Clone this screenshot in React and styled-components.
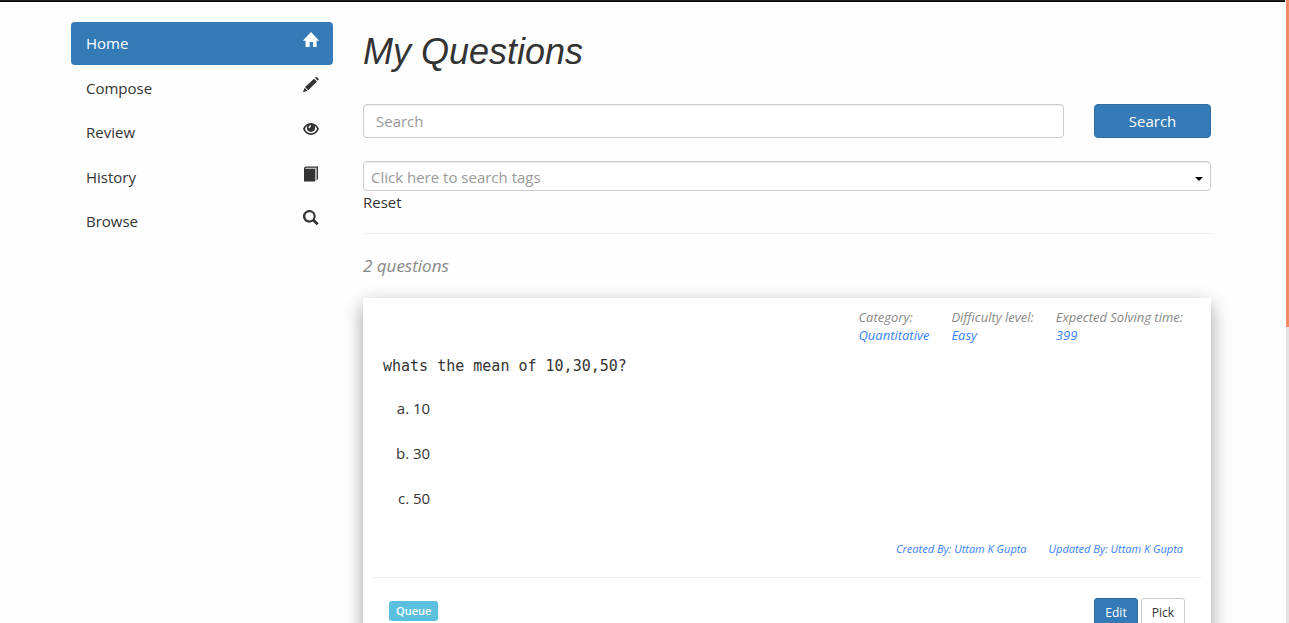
import React from "react";
import styled, { createGlobalStyle, css } from "styled-components";

const GlobalStyle = createGlobalStyle`
  *, *::before, *::after { box-sizing: border-box; }
  html { scrollbar-width: none; }
  html::-webkit-scrollbar { display: none; }
  body {
    margin: 0;
    background: #fefefe;
    color: #333;
    font: 15px/1.5 "Open Sans", "Noto Sans", sans-serif;
  }
  a { color: inherit; text-decoration: none; }
  button, input, select { font: inherit; }
`;

const TopBar = styled.header`
  height: 2px;
  margin-right: 4px;
  background: #222;
  border-bottom: 1px solid #080808;
`;

const ScrollRail = styled.div`
  position: fixed;
  inset: 0 0 0 auto;
  width: 3px;
  background: #e4e4e4;
`;

const ScrollThumb = styled.div`
  height: 327px;
  background: #f08b66;
`;

const Page = styled.div`
  padding: 20px 7px 40px 0;
`;

const Container = styled.div`
  display: grid;
  grid-template-columns: 262fr 848fr;
  column-gap: 30px;
  align-items: start;
  max-width: 1170px;
  margin: 0 auto;
  padding: 0 15px;
`;

const Nav = styled.nav`
  display: flex;
  flex-direction: column;
  gap: 2px;
`;

const NavLink = styled.a`
  display: flex;
  justify-content: space-between;
  align-items: flex-start;
  padding: 10px 14px 10px 15px;
  border-radius: 4px;
  ${(p) => p.$active && css`
    background: #337ab7;
    color: #fff;
  `}
`;

const Glyph = styled.svg`
  width: 16px;
  height: 16px;
  fill: currentColor;
`;

const Main = styled.main`
  min-width: 0;
`;

const Title = styled.h1`
  margin: 10px 0 33px;
  font: italic 400 36px/39px "Liberation Sans", Arial, sans-serif;
`;

const SearchForm = styled.form`
  display: grid;
  grid-template-columns: 6fr 1fr;
  column-gap: 30px;
  margin-bottom: 23px;
`;

const field = css`
  display: block;
  width: 100%;
  background: #fff;
  border: 1px solid #ccc;
  border-radius: 4px;
  box-shadow: inset 0 1px 1px rgba(0, 0, 0, 0.075);
`;

const SearchInput = styled.input`
  ${field}
  height: 34px;
  padding: 6px 12px;
  &::placeholder { color: #999; opacity: 1; }
`;

const Button = styled.button`
  height: ${(p) => (p.$small ? 30 : 34)}px;
  padding: 0 10px;
  border: 1px solid ${(p) => (p.$primary ? "#2e6da4" : "#ccc")};
  border-radius: ${(p) => (p.$small ? 3 : 4)}px;
  background: ${(p) => (p.$primary ? "#337ab7" : "#fff")};
  color: ${(p) => (p.$primary ? "#fff" : "#333")};
  font-size: ${(p) => (p.$small ? 12 : 15)}px;
`;

const TagField = styled.div`
  position: relative;
  &::after {
    content: "";
    position: absolute;
    top: 16px;
    right: 8px;
    border: 4px solid transparent;
    border-top-color: #000;
    border-bottom: 0;
    pointer-events: none;
  }
`;

const TagSelect = styled.select`
  ${field}
  height: 30px;
  padding: 2px 7px 0;
  appearance: none;
  color: #999;
`;

const ResetLink = styled.a`
  display: block;
  width: fit-content;
  line-height: 22px;
`;

const Divider = styled.hr`
  margin: 20px 0;
  border: 0;
  border-top: 1px solid #eee;
`;

const Count = styled.p`
  margin: 0 0 20px;
  color: #888;
  font-size: 17px;
  font-style: italic;
  line-height: 24px;
`;

const Card = styled.article`
  padding: 10px 10px 20px;
  background: #fff;
  box-shadow: 0 8px 17px rgba(0, 0, 0, 0.2), 0 6px 20px rgba(0, 0, 0, 0.19);
`;

const MetaRow = styled.dl`
  display: flex;
  justify-content: flex-end;
  gap: 22px;
  margin: 0 18px 0 0;
  color: #888;
  font-size: 13px;
  font-style: italic;
  line-height: 18px;
  dd { margin: 0; color: #3b82fb; }
`;

const Question = styled.pre`
  margin: 11px 10px 20px;
  font: 15px/22px "DejaVu Sans Mono", monospace;
`;

const Options = styled.ol`
  margin: 0;
  padding-left: 40px;
  list-style: lower-alpha;
  li { height: 45px; line-height: 22px; }
`;

const Authors = styled.div`
  display: flex;
  justify-content: flex-end;
  gap: 22px;
  margin: 9px 18px 0 0;
  color: #3b82fb;
  font-size: 11px;
  font-style: italic;
  line-height: 16px;
`;

const CardFooter = styled.footer`
  display: flex;
  justify-content: space-between;
  align-items: flex-start;
  padding: 0 16px;
`;

const Badge = styled.span`
  margin-top: 3px;
  padding: 0 7px;
  border-radius: 3px;
  background: #5bc0de;
  color: #fff;
  font-size: 11px;
  font-weight: 600;
  line-height: 20px;
`;

const Actions = styled.div`
  display: flex;
  gap: 3px;
`;

const icons = {
  home: <path d="M8 0 16 8.4V8.8H13.6V15H10V10H6.6V15H2.6V8.8H0V8.4Z" />,
  pencil: (
    <path d="M12 .7 12.6.2Q13.5-.4 14.3.4L15.4 1.6Q16 2.4 15.3 3.1L14.7 3.7ZM11 1.7 14 4.6 5.2 13.2 2 10.1ZM1.5 10.7 4.6 13.7 0 15.2Z" />
  ),
  eye: (
    <path fillRule="evenodd" d="M0 7.8C1.6 4.2 4.6 2 8 2S14.4 4.2 16 7.8C14.4 12 11.2 14 8 14S1.6 12 0 7.8ZM1.9 8C3.2 11 5.5 12.3 8 12.3S12.8 11 14.1 8C13.5 6.6 12.7 5.4 11.6 4.6Q12.1 5.6 12.1 6.8A4.1 4.1 0 0 1 3.9 6.8Q3.9 5.6 4.4 4.6C3.3 5.4 2.5 6.6 1.9 8ZM7.4 3.9Q5.5 4.7 5.5 6.8L6.7 7.2Q6.9 5.6 8.3 4.9Z" />
  ),
  book: (
    <>
      <path d="M1 3H12V15.5H1Z" />
      <path d="M1 3V2Q1.5.4 3 .4H15V13L13.8 14.6V1.7H3L2 3Z" />
      <path d="M3 1.7H13.8V14L12 15.5V3H2Z" opacity=".35" />
    </>
  ),
  search: (
    <path fillRule="evenodd" d="M6.5 0A6.3 6.3 0 0 1 11.8 9.5L15.6 13.3 13.7 15.2 9.8 11.5A6.3 6.3 0 1 1 6.5 0ZM6.5 2.2A4.1 4.1 0 1 0 6.5 10.4 4.1 4.1 0 1 0 6.5 2.2Z" />
  ),
};

const links = [
  ["Home", "home"],
  ["Compose", "pencil"],
  ["Review", "eye"],
  ["History", "book"],
  ["Browse", "search"],
];

const meta = [
  ["Category:", "Quantitative"],
  ["Difficulty level:", "Easy"],
  ["Expected Solving time:", "399"],
];

export default function App() {
  return (
    <>
      <GlobalStyle />
      <TopBar />
      <Page>
        <Container>
          <Nav aria-label="Main">
            {links.map(([label, icon], i) => (
              <NavLink key={label} href="#" $active={i === 0}>
                {label}
                <Glyph viewBox="0 0 16 16" aria-hidden="true">{icons[icon]}</Glyph>
              </NavLink>
            ))}
          </Nav>
          <Main>
            <Title>My Questions</Title>
            <SearchForm onSubmit={(e) => e.preventDefault()}>
              <SearchInput type="text" placeholder="Search" aria-label="Search" />
              <Button type="submit" $primary>Search</Button>
            </SearchForm>
            <TagField>
              <TagSelect aria-label="Tags" defaultValue="">
                <option value="">Click here to search tags</option>
              </TagSelect>
            </TagField>
            <ResetLink href="#">Reset</ResetLink>
            <Divider />
            <Count>2 questions</Count>
            <Card>
              <MetaRow>
                {meta.map(([term, value]) => (
                  <div key={term}>
                    <dt>{term}</dt>
                    <dd>{value}</dd>
                  </div>
                ))}
              </MetaRow>
              <Question>whats the mean of 10,30,50?</Question>
              <Options>
                <li>10</li>
                <li>30</li>
                <li>50</li>
              </Options>
              <Authors>
                <span>Created By: Uttam K Gupta</span>
                <span>Updated By: Uttam K Gupta</span>
              </Authors>
              <Divider />
              <CardFooter>
                <Badge>Queue</Badge>
                <Actions>
                  <Button type="button" $small $primary>Edit</Button>
                  <Button type="button" $small>Pick</Button>
                </Actions>
              </CardFooter>
            </Card>
          </Main>
        </Container>
      </Page>
      <ScrollRail>
        <ScrollThumb />
      </ScrollRail>
    </>
  );
}
